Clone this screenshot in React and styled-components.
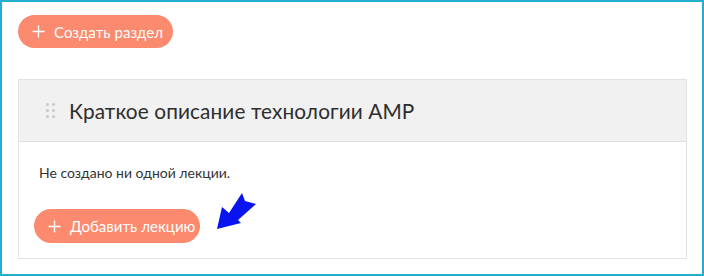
import React from "react";
import styled, { createGlobalStyle } from "styled-components";

const Global = createGlobalStyle`
  html, body { margin: 0; padding: 0; background: #fff; }
  body { font-family: "Lato", "Noto Sans", sans-serif; }
  * { box-sizing: border-box; }
`;

const Frame = styled.div`
  width: 704px;
  height: 276px;
  border: 2px solid #21aed0;
  padding: 13px 14px 0 16px;
  display: flex;
  flex-direction: column;
  align-items: flex-start;
`;

const PillButton = styled.button`
  display: inline-flex;
  align-items: center;
  gap: 9px;
  height: ${(p) => p.$h}px;
  width: ${(p) => p.$w}px;
  padding: 0 0 0 14px;
  border: none;
  border-radius: 17px;
  background: #fb8a6e;
  color: #fff;
  font-family: "Lato", "Noto Sans", sans-serif;
  font-size: 15px;
  letter-spacing: 0.05px;
  cursor: pointer;
`;

const PlusIcon = () => (
  <svg width="13" height="13" viewBox="0 0 13 13">
    <path d="M6.5 0.5v12M0.5 6.5h12" stroke="#fff" strokeWidth="1.4" fill="none" />
  </svg>
);

const Card = styled.section`
  margin-top: 31px;
  width: 669px;
  border: 1px solid #e3e3e3;
  background: #fff;
`;

const CardHeader = styled.div`
  height: 62px;
  background: #f1f1f1;
  border-bottom: 1px solid #e0e0e0;
  display: flex;
  align-items: center;
  padding-left: 27px;
  gap: 14px;
`;

const Handle = styled.div`
  display: grid;
  grid-template-columns: repeat(2, 3px);
  grid-gap: 3px 3px;
  span {
    width: 3px;
    height: 3px;
    border-radius: 50%;
    background: #c8c8c8;
  }
`;

const Title = styled.h2`
  margin: 0;
  font-family: "Lato", "Noto Sans", sans-serif;
  font-weight: 400;
  font-size: 20.8px;
  letter-spacing: 0.1px;
  color: #2e2e2e;
`;

const CardBody = styled.div`
  padding: 22px 15px 15px 15px;
  display: flex;
  flex-direction: column;
  align-items: flex-start;
  position: relative;
`;

const Empty = styled.p`
  margin: 0 0 28px 5px;
  font-size: 14px;
  color: #333;
  font-family: "Lato", "Noto Sans", sans-serif;
`;

const Arrow = styled.svg`
  position: absolute;
  left: 196px;
  top: 50px;
`;

export default function App() {
  return (
    <>
      <Global />
      <Frame>
        <PillButton $w={155} $h={33}>
          <PlusIcon />
          Создать раздел
        </PillButton>
        <Card>
          <CardHeader>
            <Handle>
              <span /><span /><span /><span /><span /><span />
            </Handle>
            <Title>Краткое описание технологии AMP</Title>
          </CardHeader>
          <CardBody>
            <Empty>Не создано ни одной лекции.</Empty>
            <PillButton $w={166} $h={34}>
              <PlusIcon />
              Добавить лекцию
            </PillButton>
            <Arrow width="42" height="38" viewBox="196 191 42 38">
              <polygon
                points="198,228 203,206 210,212 223,192 226,200 237,203 219,219 222,222"
                fill="#0a14f0"
              />
            </Arrow>
          </CardBody>
        </Card>
      </Frame>
    </>
  );
}
